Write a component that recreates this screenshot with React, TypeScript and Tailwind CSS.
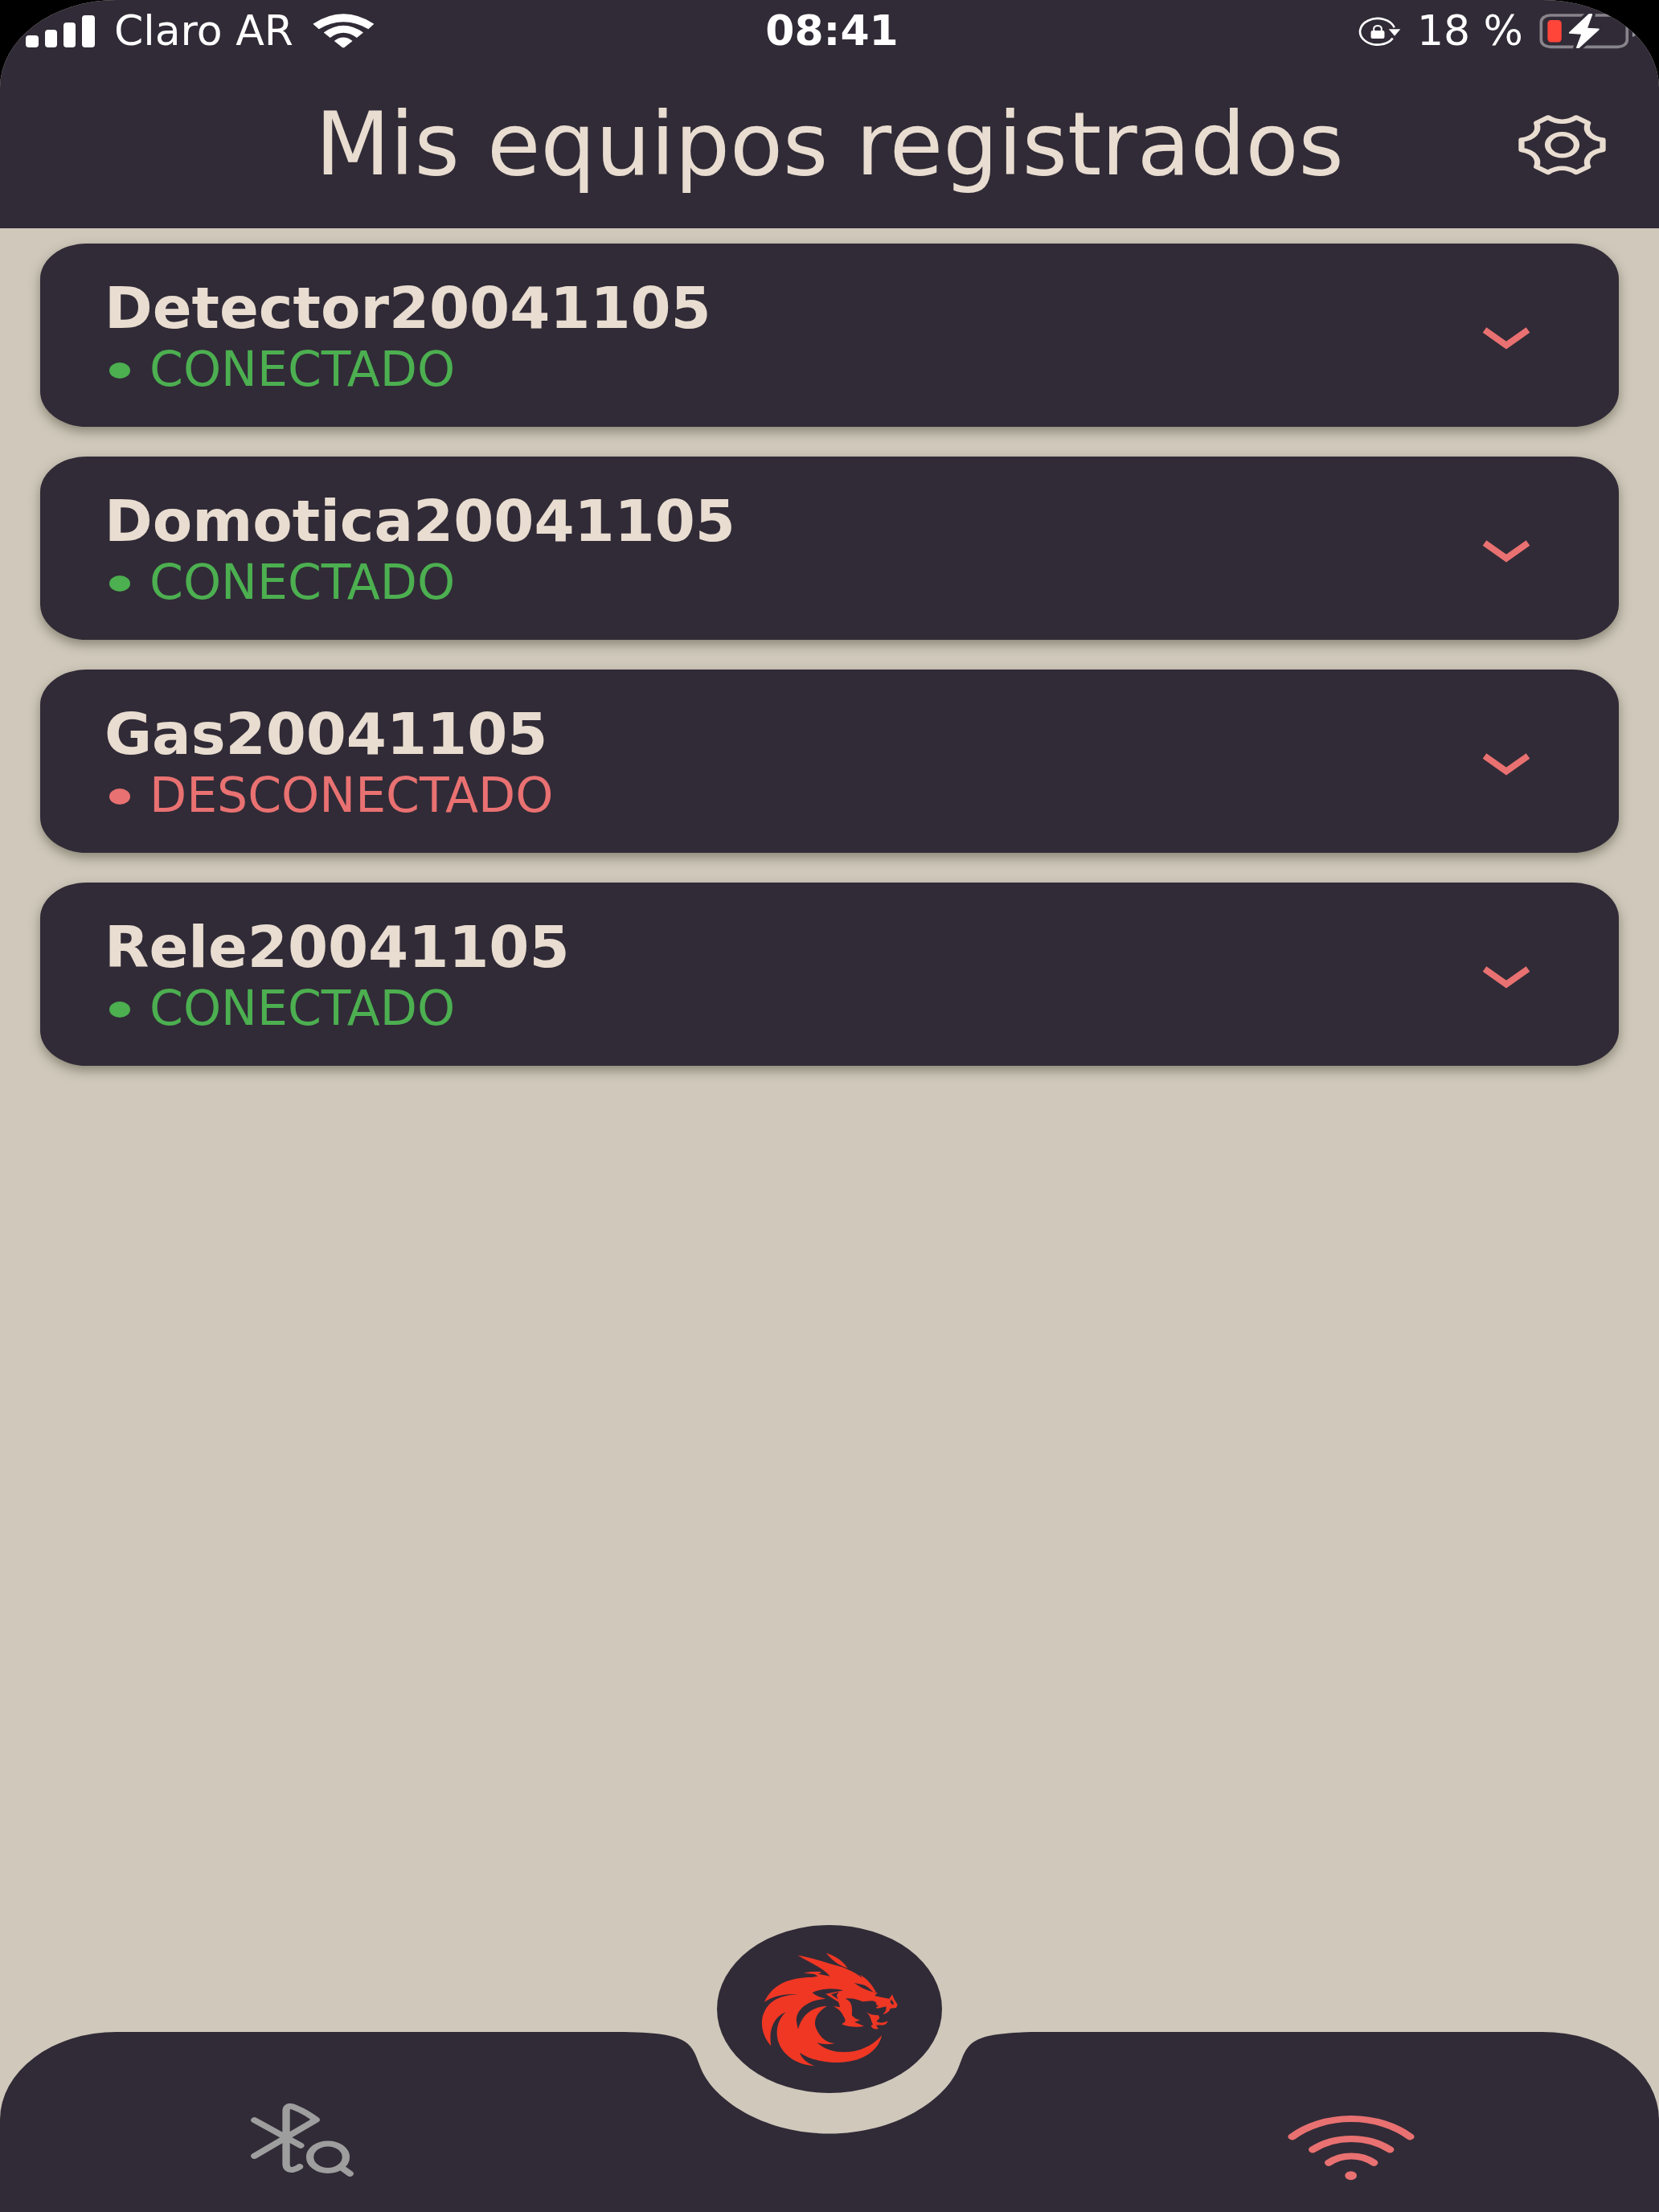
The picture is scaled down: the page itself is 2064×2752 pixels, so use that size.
import { useState } from "react";

type Device = {
  name: string;
  connected: boolean;
};

const devices: Device[] = [
  { name: "Detector20041105", connected: true },
  { name: "Domotica20041105", connected: true },
  { name: "Gas20041105", connected: false },
  { name: "Rele20041105", connected: true },
];

const SignalIcon = () => (
  <svg width="86" height="41" viewBox="0 0 86 41" fill="#fff">
    <rect x="0" y="26" width="16" height="15" rx="4" />
    <rect x="24" y="19" width="15" height="22" rx="4" />
    <rect x="47" y="10" width="15" height="31" rx="4" />
    <rect x="70" y="1" width="16" height="40" rx="4" />
  </svg>
);

const StatusWifiIcon = () => (
  <svg width="77" height="43" viewBox="1212 46 230 128" preserveAspectRatio="none" fill="#fff">
    <path d="M1213 84Q1326 10 1440 84L1419 103Q1326 50 1235 103Z" />
    <path d="M1253 116Q1326 64 1400 116L1376 135Q1326 99 1277 135Z" />
    <path d="M1292 147Q1326 121 1360 147L1330 171Q1326 173 1322 171Z" />
  </svg>
);

const RotationLockIcon = () => (
  <svg width="53" height="38" viewBox="88 60 160 114" preserveAspectRatio="none" fill="#fff">
    <path d="M217 146A66 49 0 1 1 223 106" fill="none" stroke="#fff" strokeWidth="8" />
    <path d="M202 112H246L224 137Z" />
    <rect x="135" y="117" width="51" height="30" rx="6" />
    <path d="M146 120V108A15 12 0 0 1 175 108V120" fill="none" stroke="#fff" strokeWidth="6" />
  </svg>
);

const BatteryIcon = () => (
  <svg width="123" height="45" viewBox="766 44 368 136" preserveAspectRatio="none">
    <rect
      x="773"
      y="53"
      width="320"
      height="119"
      rx="34"
      ry="26"
      fill="none"
      stroke="#fff"
      strokeOpacity="0.42"
      strokeWidth="11"
    />
    <path d="M1113 90Q1131 96 1131 112Q1131 128 1113 135Z" fill="#98959b" />
    <rect x="797" y="71" width="52" height="83" rx="13" fill="#ff453a" />
    <path
      d="M962 47L950 48L876 118L878 122L922 125L903 176L914 177L990 107L988 103L946 101L964 51Z"
      fill="#fff"
      stroke="#312b37"
      strokeWidth="22"
      strokeLinejoin="round"
      paintOrder="stroke"
    />
  </svg>
);

const GearIcon = () => (
  <svg
    width="109"
    height="76"
    viewBox="0 0 82 76"
    preserveAspectRatio="none"
    fill="none"
    stroke="#e8ddd0"
    strokeWidth="5.5"
    strokeLinejoin="round"
  >
    <path d="M17 11L27.8 4Q41 14.5 54.2 4L65.2 11C62 21 67 30 79 32V44.5C67 47 62 56 65.2 65.5L54.2 72.5Q41 62 27.8 72.5L17 65.5C20 56 15 47 3 44.5V32C15 30 20 21 17 11Z" />
    <circle cx="41" cy="38.3" r="13.5" />
  </svg>
);

const ChevronIcon = () => (
  <svg width="60" height="28" viewBox="0 0 60 28" fill="none" stroke="#e97171" strokeWidth="8">
    <path d="M3 3.500L30 22.500L57 3.500" />
  </svg>
);

const BluetoothSearchIcon = () => (
  <svg
    width="144"
    height="104"
    viewBox="0 -2 108 104"
    preserveAspectRatio="none"
    fill="none"
    stroke="#9e9e9e"
    strokeWidth="7"
    strokeLinecap="round"
    strokeLinejoin="round"
  >
    <path d="M3.500 25.700L46.500 57.300" />
    <path d="M3.500 70.300L61 25.300Q52 16 42 10.500Q33 4.500 33 15V80Q33 88 39 87.500Q42 87 45.500 83.700" />
    <circle cx="72" cy="71.700" r="16.800" />
    <path d="M86 86L92.500 92.300" />
  </svg>
);

const WifiIcon = () => (
  <svg
    width="160"
    height="104"
    viewBox="0 -18 120 104"
    preserveAspectRatio="none"
    fill="none"
    stroke="#e97171"
    strokeWidth="8"
    strokeLinecap="round"
  >
    <path d="M5.800 30.300A79 79 0 0 1 115.700 30.300" />
    <path d="M25 46.300A55 55 0 0 1 96.800 46.300" />
    <path d="M40 62.700A30.500 30.500 0 0 1 81.800 62.700" />
    <circle cx="60.500" cy="78.700" r="5.500" fill="#e97171" stroke="none" />
  </svg>
);

const DragonLogo = () => (
  <svg width="173" height="144" viewBox="190 140 520 432" preserveAspectRatio="none" fill="#ef3724">
    <path
      fillRule="evenodd"
      d="M205 328C235 262 300 236 382 236L405 232L392 224L352 220L380 215L410 215L420 217L406 223L450 232C425 200 375 182 330 154C380 160 440 185 485 195C520 205 550 222 572 240L562 226C590 240 610 268 622 290L612 291L628 293L618 305L645 311L672 316L683 300L690 318L703 338L698 350L676 352C672 365 660 372 648 374C658 365 662 358 660 345L628 352L622 349L632 342L622 338C628 330 618 325 606 324L572 327C555 318 530 312 508 316C530 325 535 340 532 378L545 390L563 396L542 403L578 418C550 424 520 420 496 412L498 407C512 405 508 390 500 380C492 362 480 352 462 344L488 347L482 328L434 298L500 285C470 276 420 275 384 294C400 306 415 310 434 316C370 320 322 355 325 400L331 430C345 375 385 345 440 343C400 365 385 400 400 430C415 462 435 478 468 483C445 488 420 486 402 480C440 515 490 520 540 512C590 502 625 475 644 452C635 500 585 552 480 554C420 554 370 540 337 517C345 540 365 555 392 567C300 560 250 500 252 440C253 410 265 385 285 366C240 385 220 430 230 492C190 450 190 390 205 365C225 320 270 303 328 300C285 295 240 305 205 328ZM540 257C555 264 565 278 612 291C600 278 585 264 567 262ZM454 300L484 291L475 302L480 318ZM678 318L676 330L686 340L689 332Z"
    />
    <path d="M436 145C470 156 500 175 516 202C485 190 462 178 436 145Z" />
    <path d="M586 366C600 376 615 378 632 378L636 388L624 400C640 410 655 405 666 399C664 412 650 417 636 414L622 415L632 428C615 432 605 425 604 416L611 412C601 395 605 382 586 366Z" />
  </svg>
);

const StatusBar = () => (
  <div className="grid h-[76px] grid-cols-3 items-center pr-[26px] pl-8 text-[52px] leading-none text-white">
    <div className="flex items-center gap-6">
      <SignalIcon />
      <span>Claro AR</span>
      <StatusWifiIcon />
    </div>
    <span className="text-center font-bold">08:41</span>
    <div className="flex items-center justify-end gap-5">
      <RotationLockIcon />
      <span>18 %</span>
      <BatteryIcon />
    </div>
  </div>
);

const DeviceCard = ({ device }: { device: Device }) => {
  const [open, setOpen] = useState(false);

  return (
    <button
      type="button"
      aria-expanded={open}
      onClick={() => setOpen(!open)}
      className="flex w-full items-center justify-between rounded-[58px/44px] bg-[#312b37] pt-[42px] pr-[110px] pb-[34px] pl-20 text-left shadow-[0_6px_14px_rgba(70,70,50,0.5)]"
    >
      <span className="flex flex-col">
        <span className="text-[72px] leading-[76px] font-bold text-[#e8ddd0]">{device.name}</span>
        <span
          className={`flex items-center gap-6 pl-[6px] text-[60px] leading-[76px] ${
            device.connected ? "text-[#4caf50]" : "text-[#e97171]"
          }`}
        >
          <span className="mt-1 h-5 w-[26px] rounded-[50%] bg-current" />
          {device.connected ? "CONECTADO" : "DESCONECTADO"}
        </span>
      </span>
      <ChevronIcon />
    </button>
  );
};

const BottomNav = () => (
  <nav className="flex h-56">
    <button
      type="button"
      aria-label="Bluetooth"
      className="flex flex-1 justify-center rounded-tl-[145px_109px] bg-[#312b37] pt-[82px]"
    >
      <BluetoothSearchIcon />
    </button>
    <div className="relative w-[528px]">
      {/* Notch under the round button */}
      <svg width="528" height="224" viewBox="0 0 528 224" fill="#312b37">
        <path d="M0 0C48 0 72 4 84 12C95 19 98 30 103 43C118 84 182 126.500 264 126.500C346 126.500 410 84 425 43C430 30 433 19 444 12C456 4 480 0 528 0V224H0Z" />
      </svg>
      <button
        type="button"
        aria-label="Inicio"
        className="absolute -top-[133px] left-1/2 flex h-[209px] w-[280px] -translate-x-1/2 items-center justify-center rounded-[50%] bg-[#312b37]"
      >
        <DragonLogo />
      </button>
    </div>
    <button
      type="button"
      aria-label="Wifi"
      className="flex flex-1 justify-center rounded-tr-[145px_109px] bg-[#312b37] pt-[82px]"
    >
      <WifiIcon />
    </button>
  </nav>
);

const App = () => {
  return (
    <div className="min-h-screen bg-black font-['DejaVu_Sans',sans-serif]">
      <div className="flex min-h-screen flex-col overflow-hidden rounded-t-[145px_109px] bg-[#cfc8bb]">
        <header className="bg-[#312b37]">
          <StatusBar />
          <div className="grid h-52 grid-cols-[1fr_auto_1fr] items-center px-[66px]">
            <h1 className="col-start-2 text-[108px] leading-none text-[#e8ddd0]">
              Mis equipos registrados
            </h1>
            <button type="button" aria-label="Ajustes" className="justify-self-end">
              <GearIcon />
            </button>
          </div>
        </header>

        <main className="flex flex-1 flex-col gap-[37px] px-[50px] pt-[19px]">
          {devices.map((device) => (
            <DeviceCard key={device.name} device={device} />
          ))}
        </main>

        <BottomNav />
      </div>
    </div>
  );
};

export default App;
